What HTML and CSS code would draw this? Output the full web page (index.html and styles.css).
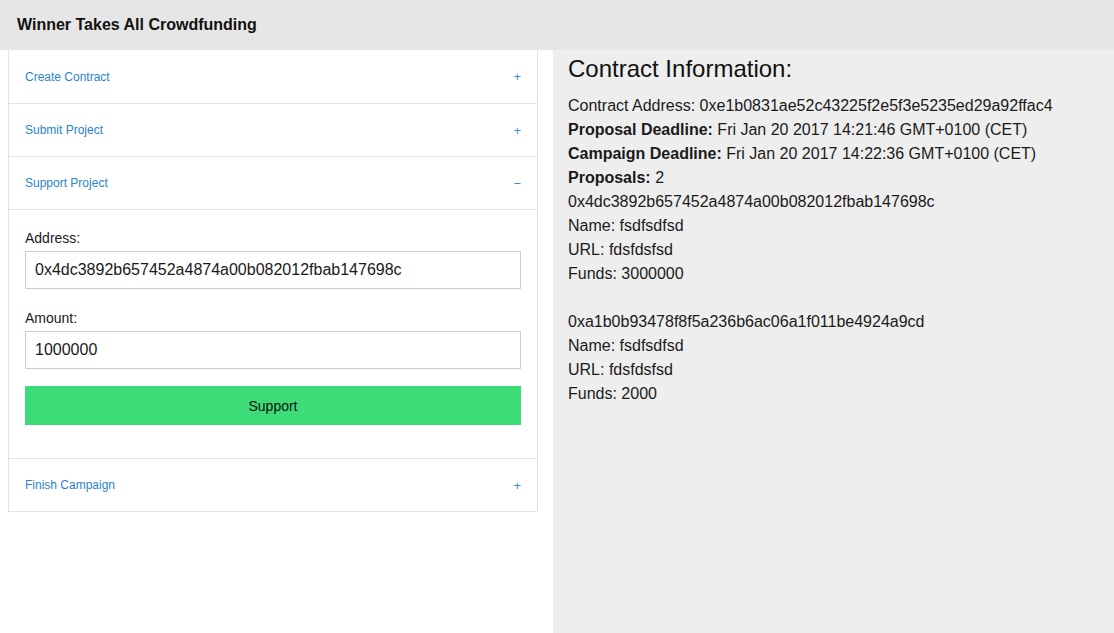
FILE: index.html
```html
<!DOCTYPE html>
<html>
<head>
<meta charset="utf-8">
<link rel="stylesheet" href="styles.css">
</head>
<body>
<header class="topbar"><h1 class="title">Winner Takes All Crowdfunding</h1></header>
<main class="layout">
  <section class="left">
    <div class="accordion">
      <div class="acc-item">
        <div class="acc-head"><span class="acc-label">Create Contract</span><span class="acc-sign">+</span></div>
      </div>
      <div class="acc-item">
        <div class="acc-head"><span class="acc-label">Submit Project</span><span class="acc-sign">+</span></div>
      </div>
      <div class="acc-item">
        <div class="acc-head"><span class="acc-label">Support Project</span><span class="acc-sign minus">&minus;</span></div>
        <div class="acc-body">
          <div class="field">
            <label class="field-label">Address:</label>
            <input class="field-input" type="text" value="0x4dc3892b657452a4874a00b082012fbab147698c">
          </div>
          <div class="field">
            <label class="field-label">Amount:</label>
            <input class="field-input" type="text" value="1000000">
          </div>
          <button class="btn-support">Support</button>
        </div>
      </div>
      <div class="acc-item">
        <div class="acc-head"><span class="acc-label">Finish Campaign</span><span class="acc-sign">+</span></div>
      </div>
    </div>
  </section>
  <section class="right">
    <h2 class="info-title">Contract Information:</h2>
    <div class="info">
      <div class="line">Contract Address: 0xe1b0831ae52c43225f2e5f3e5235ed29a92ffac4</div>
      <div class="line"><b>Proposal Deadline:</b> Fri Jan 20 2017 14:21:46 GMT+0100 (CET)</div>
      <div class="line"><b>Campaign Deadline:</b> Fri Jan 20 2017 14:22:36 GMT+0100 (CET)</div>
      <div class="line"><b>Proposals:</b> 2</div>
      <div class="proposal">
        <div class="line">0x4dc3892b657452a4874a00b082012fbab147698c</div>
        <div class="line">Name: fsdfsdfsd</div>
        <div class="line">URL: fdsfdsfsd</div>
        <div class="line">Funds: 3000000</div>
      </div>
      <div class="proposal">
        <div class="line">0xa1b0b93478f8f5a236b6ac06a1f011be4924a9cd</div>
        <div class="line">Name: fsdfsdfsd</div>
        <div class="line">URL: fdsfdsfsd</div>
        <div class="line">Funds: 2000</div>
      </div>
    </div>
  </section>
</main>
</body>
</html>
```
FILE: styles.css
```css
* { box-sizing: border-box; }
html, body { margin: 0; padding: 0; height: 100%; }
body {
  font-family: "Liberation Sans", Arial, sans-serif;
  color: #1a1a1a;
  background: #fff;
  display: flex;
  flex-direction: column;
}
.topbar {
  height: 50px;
  background: #e6e6e6;
  display: flex;
  align-items: center;
  padding-left: 17px;
  flex-shrink: 0;
}
.title {
  margin: 0;
  font-size: 16px;
  font-weight: bold;
  color: #111;
}
.layout {
  flex: 1;
  display: flex;
}
.left {
  width: 553px;
  padding-left: 8px;
  padding-right: 15px;
  background: #fff;
}
.accordion {
  border: 1px solid #e2e2e2;
  border-top: none;
}
.acc-item + .acc-item { border-top: 1px solid #e2e2e2; }
.acc-head {
  height: 52px;
  display: flex;
  align-items: center;
  justify-content: space-between;
  padding: 0 16px;
  color: #2b84c8;
  font-size: 12px;
}
.acc-item:first-child .acc-head { height: 53px; }
.acc-sign { font-size: 13px; color: #3a8fd0; }
.acc-sign.minus { font-size: 13px; }
.acc-body {
  border-top: 1px solid #e2e2e2;
  padding: 18px 16px 33px;
}
.field { margin-bottom: 19px; }
.field-label {
  display: block;
  font-size: 14px;
  line-height: 20px;
  margin-bottom: 3px;
  color: #1a1a1a;
}
.field-input {
  display: block;
  width: 100%;
  height: 38px;
  border: 1px solid #cccccc;
  padding: 0 9px;
  font-family: "Liberation Sans", Arial, sans-serif;
  font-size: 16px;
  color: #1a1a1a;
  background: #fff;
  outline: none;
}
.field + .btn-support { margin-top: -2px; }
.btn-support {
  display: block;
  width: 100%;
  height: 39px;
  border: none;
  background: #3ddc79;
  font-family: "Liberation Sans", Arial, sans-serif;
  font-size: 14px;
  color: #111;
}
.right {
  flex: 1;
  background: #eeeeee;
  padding-left: 15px;
  padding-top: 1px;
}
.info-title {
  margin: 0 0 7px;
  font-size: 24px;
  line-height: 36px;
  font-weight: normal;
  color: #111;
}
.info { font-size: 16px; line-height: 24px; color: #1a1a1a; }
.proposal + .proposal { margin-top: 24px; }
```
